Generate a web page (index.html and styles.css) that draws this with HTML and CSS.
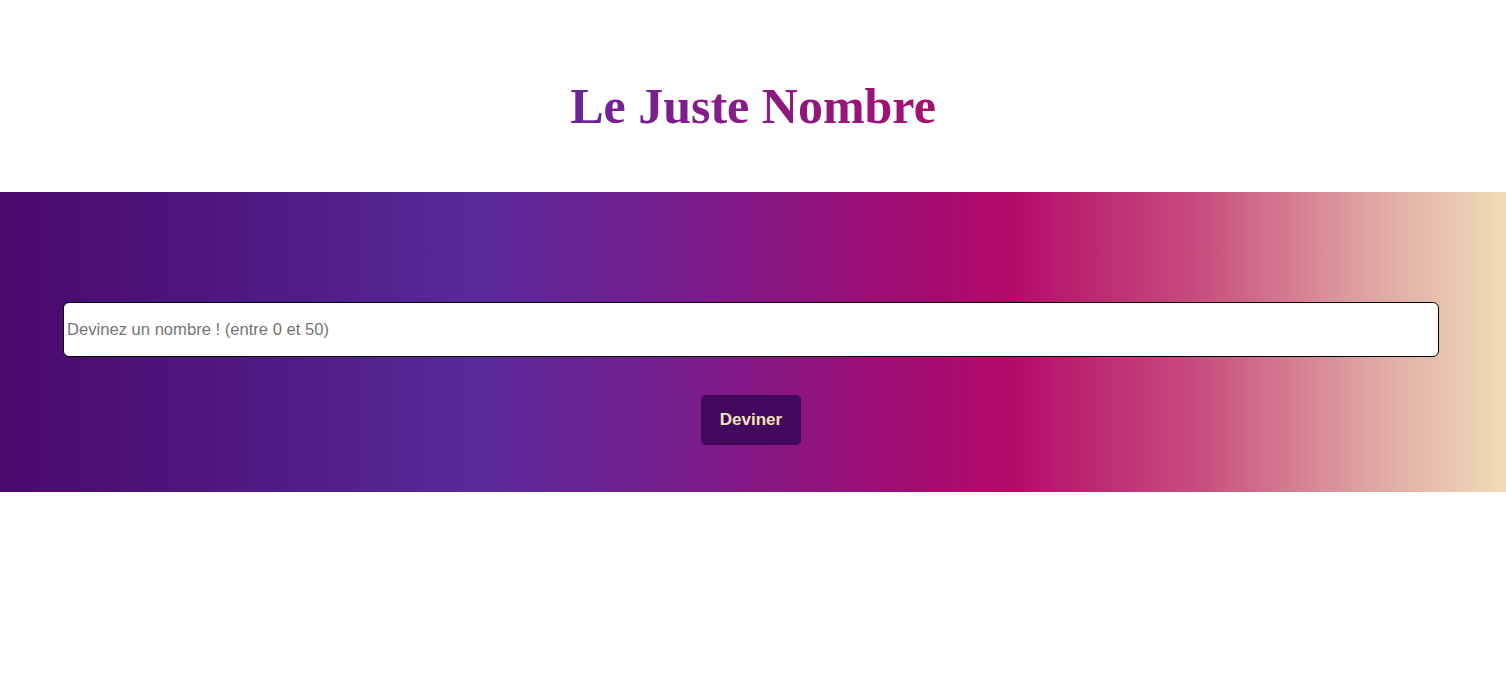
FILE: index.html
```html
<!DOCTYPE html>
<html lang="fr">
<head>
<meta charset="utf-8">
<title>Le Juste Nombre</title>
<link rel="stylesheet" href="styles.css">
</head>
<body>
  <header class="header">
    <h1 class="title">Le Juste Nombre</h1>
  </header>
  <section class="game">
    <input class="guess" type="text" placeholder="Devinez un nombre ! (entre 0 et 50)">
    <button class="btn" type="button">Deviner</button>
  </section>
</body>
</html>
```

FILE: styles.css
```css
html, body {
  margin: 0;
  padding: 0;
  background: #ffffff;
}

body {
  font-family: "Liberation Sans", Arial, sans-serif;
}

.header {
  height: 192px;
  box-sizing: border-box;
  padding-top: 79px;
  display: flex;
  justify-content: center;
  align-items: flex-start;
}

.title {
  margin: 0;
  font-family: "Liberation Serif", "Times New Roman", serif;
  font-weight: bold;
  font-size: 50px;
  line-height: 55px;
  background: linear-gradient(90deg, #6a2599 0%, #8a1a86 50%, #a5106f 100%);
  -webkit-background-clip: text;
  background-clip: text;
  color: transparent;
}

.game {
  height: 300px;
  box-sizing: border-box;
  padding: 110px 67px 0 63px;
  background: linear-gradient(90deg,
    #4a086b 0%,
    #4f1b84 18%,
    #5a2a9a 32%,
    #7a1d8c 46%,
    #a00c72 60%,
    #b30a6a 67%,
    #c8507e 80%,
    #dc9ea0 90%,
    #efdcb6 100%);
  display: flex;
  flex-direction: column;
  align-items: center;
}

.guess {
  width: 100%;
  height: 55px;
  box-sizing: border-box;
  border: 1px solid #000;
  border-radius: 6px;
  padding: 0 3px;
  font-family: "Liberation Sans", Arial, sans-serif;
  font-size: 16.6px;
  background: #fff;
  outline: none;
}

.guess::placeholder {
  color: #757575;
}

.btn {
  margin-top: 38px;
  width: 100px;
  height: 50px;
  border: none;
  border-radius: 5px;
  background: #42075f;
  color: #f3e3b5;
  font-family: "Liberation Sans", Arial, sans-serif;
  font-weight: bold;
  font-size: 17px;
  cursor: pointer;
}
```
